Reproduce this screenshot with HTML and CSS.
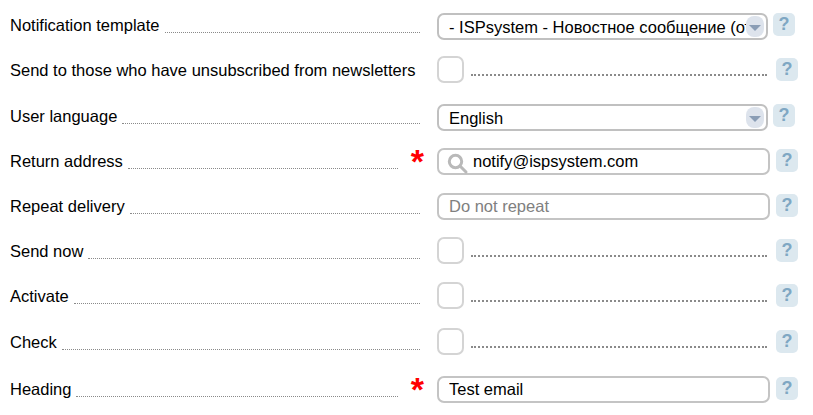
FILE: index.html
```html
<!DOCTYPE html>
<html lang="en">
<head>
    <meta charset="UTF-8">
    <title>Notification</title>
    <link rel="stylesheet" href="styles.css">
</head>
<body>

<form class="form">
    <div class="row">
        <label class="label"><span>Notification template</span><i class="dots"></i></label>
        <div class="control select-wrap">
            <select class="select">
                <option>- ISPsystem - Новостное сообщение (отправка)</option>
            </select>
            <span class="arrow"></span>
        </div>
        <span class="help help-near">?</span>
    </div>

    <div class="row row-46">
        <label class="label"><span>Send to those who have unsubscribed from newsletters</span><i class="dots"></i></label>
        <div class="control check-wrap">
            <input type="checkbox" class="check">
            <i class="check-dots"></i>
        </div>
        <span class="help">?</span>
    </div>

    <div class="row">
        <label class="label"><span>User language</span><i class="dots"></i></label>
        <div class="control select-wrap">
            <select class="select">
                <option>English</option>
            </select>
            <span class="arrow"></span>
        </div>
        <span class="help help-near">?</span>
    </div>

    <div class="row">
        <label class="label label-required"><span>Return address</span><i class="dots"></i><b class="star">*</b></label>
        <div class="control input-wrap">
            <svg class="search" width="22" height="22" viewBox="0 0 22 22">
                <circle cx="8.5" cy="8.5" r="6.2" fill="none" stroke="#b9b9b9" stroke-width="3"/>
                <path d="M13 13l6 6" stroke="#b9b9b9" stroke-width="3" stroke-linecap="round"/>
            </svg>
            <input type="text" class="input input-search" value="notify@ispsystem.com">
        </div>
        <span class="help">?</span>
    </div>

    <div class="row">
        <label class="label"><span>Repeat delivery</span><i class="dots"></i></label>
        <div class="control input-wrap">
            <input type="text" class="input" placeholder="Do not repeat">
        </div>
        <span class="help">?</span>
    </div>

    <div class="row">
        <label class="label"><span>Send now</span><i class="dots"></i></label>
        <div class="control check-wrap">
            <input type="checkbox" class="check">
            <i class="check-dots"></i>
        </div>
        <span class="help">?</span>
    </div>

    <div class="row row-46">
        <label class="label"><span>Activate</span><i class="dots"></i></label>
        <div class="control check-wrap">
            <input type="checkbox" class="check">
            <i class="check-dots"></i>
        </div>
        <span class="help">?</span>
    </div>

    <div class="row row-47">
        <label class="label"><span>Check</span><i class="dots"></i></label>
        <div class="control check-wrap">
            <input type="checkbox" class="check">
            <i class="check-dots"></i>
        </div>
        <span class="help">?</span>
    </div>

    <div class="row">
        <label class="label label-required"><span>Heading</span><i class="dots"></i><b class="star">*</b></label>
        <div class="control input-wrap">
            <input type="text" class="input" value="Test email">
        </div>
        <span class="help">?</span>
    </div>
</form>

</body>
</html>
```

FILE: styles.css
```css
html, body {
    margin: 0;
    padding: 0;
    background: #fff;
    overflow: hidden;
}
body {
    font-family: "Liberation Sans", Arial, sans-serif;
    font-size: 16.5px;
    color: #000;
}
.form {
    padding: 14px 0 0 10px;
}
.row {
    display: flex;
    align-items: flex-start;
    height: 45px;
}
.row-46 {
    height: 46px;
}
.row-47 {
    height: 47px;
}
.label {
    display: flex;
    align-items: flex-end;
    width: 410px;
    height: 18px;
    line-height: 18px;
    padding-top: 2px;
    margin-right: 17px;
    position: relative;
    white-space: nowrap;
}
.dots {
    flex: 1;
    margin: 0 0 1px 5px;
    border-bottom: 1px dotted #8a8a8a;
}
.label-required .dots {
    margin-right: 22px;
}
.star {
    position: absolute;
    right: -4px;
    top: -6px;
    color: #f00;
    font-size: 34px;
    line-height: 34px;
    font-weight: bold;
}
.select-wrap {
    position: relative;
    width: 331px;
    height: 27px;
    margin: -1px 5px 0 0;
}
.select {
    appearance: none;
    width: 100%;
    height: 27px;
    padding: 0 20px 0 10px;
    background: #fff;
    border: 2px solid #c0c0c0;
    border-radius: 7px;
    font: inherit;
    color: #000;
    outline: none;
}
.arrow {
    position: absolute;
    right: 4px;
    top: 3px;
    width: 18px;
    height: 21px;
    background: #dde3ec;
    border-radius: 8px;
}
.arrow::after {
    content: "";
    position: absolute;
    left: 3px;
    top: 9px;
    border-style: solid;
    border-width: 6px 6px 0;
    border-color: #8a9db5 transparent transparent;
}
.input-wrap {
    position: relative;
    width: 333px;
    height: 27px;
    margin: -2px 6px 0 0;
}
.input {
    width: 100%;
    height: 27px;
    box-sizing: border-box;
    padding: 0 10px;
    border: 2px solid #c4c4c4;
    border-radius: 7px;
    font: inherit;
    color: #000;
    outline: none;
}
.input::placeholder {
    color: #808080;
    opacity: 1;
}
.input-search {
    padding-left: 34px;
}
.search {
    position: absolute;
    left: 10px;
    top: 5px;
}
.check-wrap {
    display: flex;
    align-items: flex-end;
    width: 330px;
    margin: -3px 9px 0 0;
}
.check {
    appearance: none;
    width: 27px;
    height: 27px;
    box-sizing: border-box;
    margin: 0;
    background: #fff;
    border: 2px solid #d4d4d4;
    border-radius: 7px;
}
.check-dots {
    flex: 1;
    margin: 0 0 7px 7px;
    border-bottom: 2px dotted #8a8a8a;
}
.help {
    width: 22px;
    height: 23px;
    margin-top: -1px;
    border-radius: 5px;
    background: #dce8ef;
    color: #7fa7c3;
    font-weight: bold;
    font-size: 18px;
    line-height: 22px;
    text-align: center;
}
```
